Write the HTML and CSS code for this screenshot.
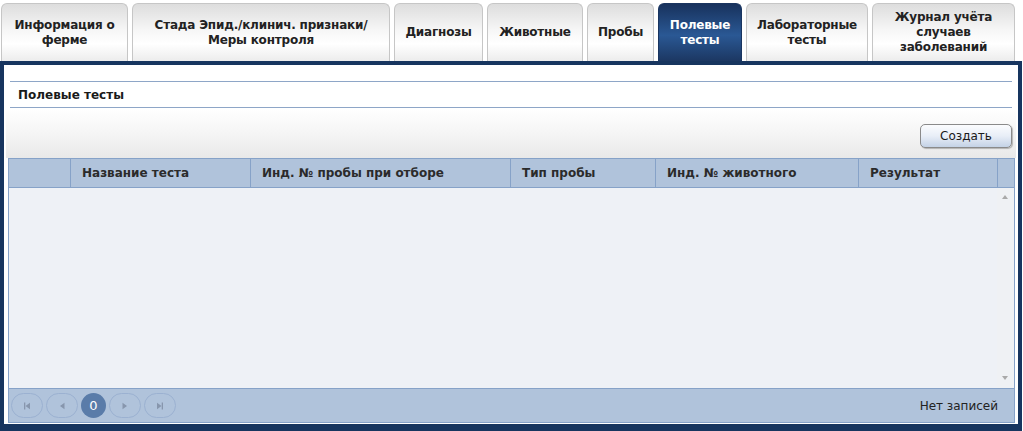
FILE: index.html
```html
<!DOCTYPE html>
<html lang="ru">
<head>
<meta charset="utf-8">
<title>Полевые тесты</title>
<link rel="stylesheet" href="styles.css">
</head>
<body>
<div class="tabs">
  <div class="tab t1">Информация о<br>ферме</div>
  <div class="tab t2">Стада Эпид./клинич. признаки/<br>Меры контроля</div>
  <div class="tab t3">Диагнозы</div>
  <div class="tab t4">Животные</div>
  <div class="tab t5">Пробы</div>
  <div class="tab t6 active">Полевые<br>тесты</div>
  <div class="tab t7">Лабораторные<br>тесты</div>
  <div class="tab t8">Журнал учёта<br>случаев<br>заболеваний</div>
</div>
<div class="panel">
  <div class="panel-inner">
    <div class="title">Полевые тесты</div>
    <div class="toolbar">
      <button class="btn-create">Создать</button>
    </div>
    <div class="grid">
      <div class="grid-head">
        <div class="th c1"></div>
        <div class="th c2">Название теста</div>
        <div class="th c3">Инд. № пробы при отборе</div>
        <div class="th c4">Тип пробы</div>
        <div class="th c5">Инд. № животного</div>
        <div class="th c6">Результат</div>
        <div class="th c7"></div>
      </div>
      <div class="grid-body">
        <div class="rows"></div>
        <div class="scroll">
          <span class="arrow up"></span>
          <span class="arrow down"></span>
        </div>
      </div>
      <div class="grid-foot">
        <div class="pager">
          <span class="pbtn"><svg width="10" height="10" viewBox="0 0 10 10"><rect x="2" y="1.5" width="1.3" height="7" fill="#8796ad"/><path d="M3.5 5 L8 1.8 L8 8.2 Z" fill="#8796ad"/></svg></span>
          <span class="pbtn"><svg width="10" height="10" viewBox="0 0 10 10"><path d="M3 5 L7.5 1.8 L7.5 8.2 Z" fill="#8796ad"/></svg></span>
          <span class="pcur">0</span>
          <span class="pbtn"><svg width="10" height="10" viewBox="0 0 10 10"><path d="M7 5 L2.5 1.8 L2.5 8.2 Z" fill="#8796ad"/></svg></span>
          <span class="pbtn"><svg width="10" height="10" viewBox="0 0 10 10"><path d="M6.5 5 L2 1.8 L2 8.2 Z" fill="#8796ad"/><rect x="6.7" y="1.5" width="1.3" height="7" fill="#8796ad"/></svg></span>
        </div>
        <div class="norec">Нет записей</div>
      </div>
    </div>
  </div>
</div>
</body>
</html>
```
FILE: styles.css
```css
* { box-sizing: border-box; }
html, body { margin: 0; padding: 0; background: #fff; }
body {
  font-family: "DejaVu Sans", Verdana, sans-serif;
  font-size: 12px;
  color: #222;
  width: 1023px;
  height: 431px;
  overflow: hidden;
}
.tabs {
  display: flex;
  gap: 4px;
  padding: 3px 0 0 1px;
  height: 61px;
}
.tab {
  height: 58px;
  border: 1px solid #c6c6c6;
  border-bottom: none;
  border-radius: 6px 6px 0 0;
  background: linear-gradient(to bottom, #dddddd 0%, #f6f6f6 45%, #ffffff 70%, #ececec 100%);
  display: flex;
  align-items: center;
  justify-content: center;
  text-align: center;
  font-weight: bold;
  font-size: 12px;
  line-height: 15px;
  color: #222;
  letter-spacing: -0.2px;
}
.t1 { width: 127px; }
.t2 { width: 258px; }
.t3 { width: 89px; }
.t4 { width: 96px; }
.t5 { width: 67px; }
.t6 { width: 84px; }
.t7 { width: 122px; }
.t8 { width: 143px; }
.tab.active {
  border-color: #1a3560;
  color: #fff;
  background: linear-gradient(to bottom, #18325d 0%, #2a5894 55%, #1c3762 100%);
}
.panel {
  width: 1022px;
  height: 370px;
  border: 4px solid #17355f;
  border-bottom-width: 7px;
  background: #fff;
}
.panel-inner {
  padding: 16px 6px 0 6px;
}
.title {
  height: 27px;
  border-top: 1px solid #8ea6c7;
  border-bottom: 1px solid #8ea6c7;
  padding-left: 8px;
  display: flex;
  align-items: center;
  font-weight: bold;
  font-size: 12px;
  color: #1a1a1a;
}
.toolbar {
  margin: 1px -4px 0 -4px;
  height: 49px;
  background: linear-gradient(to bottom, #ffffff 0%, #f7f7f7 40%, #e9e9e9 100%);
  display: flex;
  justify-content: flex-end;
  align-items: flex-start;
  padding: 15px 4px 0 0;
}
.btn-create {
  width: 92px;
  height: 24px;
  border: 1px solid #8a8a8a;
  border-radius: 5px;
  background: linear-gradient(to bottom, #fbfcfe 0%, #e8eef7 50%, #c4d2e6 100%);
  box-shadow: 1px 1px 1px rgba(0,0,0,0.25);
  font-family: "DejaVu Sans", Verdana, sans-serif;
  font-size: 12px;
  color: #1a1a1a;
  padding: 0;
}
.grid {
  margin: 0 -2px;
  border: 1px solid #86a2c8;
  width: 1007px;
}
.grid-head {
  display: flex;
  height: 29px;
  background: #b0c3db;
  border-bottom: 1px solid #86a2c8;
}
.th {
  height: 100%;
  display: flex;
  align-items: center;
  padding-left: 11px;
  font-weight: bold;
  font-size: 12px;
  color: #2b2b2b;
  border-right: 1px solid #86a2c8;
}
.c1 { width: 62px; }
.c2 { width: 180px; }
.c3 { width: 260px; }
.c4 { width: 145px; }
.c5 { width: 203px; }
.c6 { width: 139px; }
.c7 { flex: 1; border-right: none; }
.grid-body {
  display: flex;
  height: 200px;
  background: #eef1f6;
}
.rows { flex: 1; }
.scroll {
  width: 17px;
  position: relative;
  background: #eff1f4;
}
.arrow {
  position: absolute;
  left: 5px;
  width: 0;
  height: 0;
  border-left: 3.5px solid transparent;
  border-right: 3.5px solid transparent;
}
.arrow.up { top: 7px; border-bottom: 4px solid #a9a9a9; }
.arrow.down { bottom: 8px; border-top: 4px solid #a9a9a9; }
.grid-foot {
  height: 34px;
  border-top: 1px solid #86a2c8;
  background: #b0c3db;
  display: flex;
  align-items: center;
  justify-content: space-between;
  padding: 0 16px 0 2px;
}
.pager {
  display: flex;
  gap: 3px;
  align-items: center;
}
.pbtn {
  width: 32px;
  height: 25px;
  border: 1px solid #9bb1d1;
  border-radius: 13px;
  display: flex;
  align-items: center;
  justify-content: center;
}
.pcur {
  width: 25px;
  height: 25px;
  border-radius: 50%;
  background: #5a7ca9;
  color: #fff;
  display: flex;
  align-items: center;
  justify-content: center;
  font-size: 13px;
}
.norec {
  font-size: 12px;
  color: #222;
}
```
